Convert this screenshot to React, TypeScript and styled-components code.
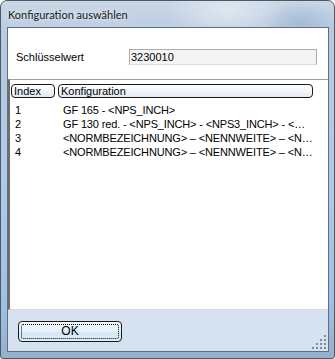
import styled, { createGlobalStyle } from 'styled-components';

const GlobalStyle = createGlobalStyle`
  html, body {
    margin: 0;
    padding: 0;
    background: #ffffff;
  }
`;

const Frame = styled.div`
  width: 335px;
  height: 359px;
  box-sizing: border-box;
  border: 1px solid #4f5963;
  border-radius: 7px 7px 3px 3px;
  background:
    radial-gradient(ellipse 60px 30px at 225px 10px, rgba(255, 255, 255, 0.45), transparent),
    radial-gradient(ellipse 40px 22px at 300px 22px, rgba(120, 150, 190, 0.35), transparent),
    linear-gradient(180deg, #c9d7e6 0%, #b7cbe0 10%, #aecae8 50%, #9fc0e6 85%, #95b0cc 100%);
  display: flex;
  flex-direction: column;
  overflow: hidden;
  font-family: 'Liberation Sans', Arial, sans-serif;
`;

const TitleBar = styled.div`
  height: 26px;
  padding-left: 7px;
  display: flex;
  align-items: center;
  font-family: Lato, 'Liberation Sans', sans-serif;
  font-size: 11px;
  color: #1b1b1b;
  text-shadow: 0 0 6px rgba(255, 255, 255, 0.9);
`;

const Client = styled.div`
  flex: 1;
  margin: 0 5px 6px 6px;
  border: 1px solid #5f6f80;
  background: #ffffff;
  display: flex;
  flex-direction: column;
  font-size: 11px;
  color: #000;
`;

const KeyRow = styled.div`
  height: 51px;
  box-sizing: border-box;
  padding: 6px 9px 0 8px;
  display: flex;
  align-items: center;
`;

const KeyLabel = styled.span`
  width: 113px;
`;

const KeyField = styled.div`
  width: 188px;
  height: 16px;
  box-sizing: border-box;
  border: 1px solid #acacac;
  border-bottom-color: #dcdcdc;
  background: #f4f4f4;
  padding-left: 1px;
  line-height: 14px;
`;

const List = styled.div`
  flex: 1;
  border-left: 2px solid #6e6e6e;
  border-top: 1px solid #a0a0a0;
  border-bottom: 1px solid #d8d8d8;
  background: #ffffff;
  padding: 4px 0 0 1px;
`;

const HeaderRow = styled.div`
  display: flex;
  gap: 3px;
  margin-bottom: 5px;
`;

const HeaderCell = styled.div<{ $w: number }>`
  width: ${p => p.$w}px;
  height: 14px;
  box-sizing: border-box;
  border: 1px solid #1a1a1a;
  border-radius: 4px;
  background: linear-gradient(180deg, #ffffff 0%, #f2f5f9 50%, #e3e9f1 100%);
  padding-left: 2px;
  line-height: 12px;
`;

const Row = styled.div`
  display: flex;
  height: 14px;
  line-height: 14px;
  white-space: nowrap;
`;

const IndexCell = styled.span`
  width: 48px;
  padding-left: 4px;
`;

const ConfigCell = styled.span`
  overflow: hidden;
  letter-spacing: -0.15px;
`;

const Footer = styled.div`
  height: 41px;
  background: #d6e2f0;
  display: flex;
  align-items: center;
  padding-left: 10px;
  position: relative;
`;

const Button = styled.button`
  width: 104px;
  height: 21px;
  border: 1px solid #1c1c1c;
  border-radius: 4px;
  background: linear-gradient(180deg, #f4f9fd 0%, #e6f1fa 50%, #d4e7f6 51%, #dcecf8 100%);
  font-family: 'Liberation Sans', Arial, sans-serif;
  font-size: 12px;
  color: #000;
  padding: 0;
  position: relative;
  margin-top: 1px;
  &::after {
    content: '';
    position: absolute;
    inset: 2px;
    border: 1px dotted #000;
    border-radius: 2px;
  }
`;

const Grip = styled.svg`
  position: absolute;
  right: 0;
  bottom: 0;
`;

const rows = [
  { i: '1', c: 'GF 165 - <NPS_INCH>' },
  { i: '2', c: 'GF 130 red. - <NPS_INCH> - <NPS3_INCH> - <…' },
  { i: '3', c: '<NORMBEZEICHNUNG> – <NENNWEITE> – <N…' },
  { i: '4', c: '<NORMBEZEICHNUNG> – <NENNWEITE> – <N…' },
];

const dots = [
  [12, 0],
  [8, 4], [12, 4],
  [4, 8], [8, 8], [12, 8],
  [0, 12], [4, 12], [8, 12], [12, 12],
];

const App = () => (
  <>
    <GlobalStyle />
    <Frame>
      <TitleBar>Konfiguration auswählen</TitleBar>
      <Client>
        <KeyRow>
          <KeyLabel>Schlüsselwert</KeyLabel>
          <KeyField>3230010</KeyField>
        </KeyRow>
        <List>
          <HeaderRow>
            <HeaderCell $w={44}>Index</HeaderCell>
            <HeaderCell $w={255}>Konfiguration</HeaderCell>
          </HeaderRow>
          {rows.map(r => (
            <Row key={r.i}>
              <IndexCell>{r.i}</IndexCell>
              <ConfigCell>{r.c}</ConfigCell>
            </Row>
          ))}
        </List>
        <Footer>
          <Button>OK</Button>
          <Grip width="16" height="16" viewBox="0 0 16 16">
            {dots.map(([x, y]) => (
              <rect key={`${x}-${y}`} x={x} y={y} width="2" height="2" fill="#7d8b9b" />
            ))}
          </Grip>
        </Footer>
      </Client>
    </Frame>
  </>
);

export default App;
